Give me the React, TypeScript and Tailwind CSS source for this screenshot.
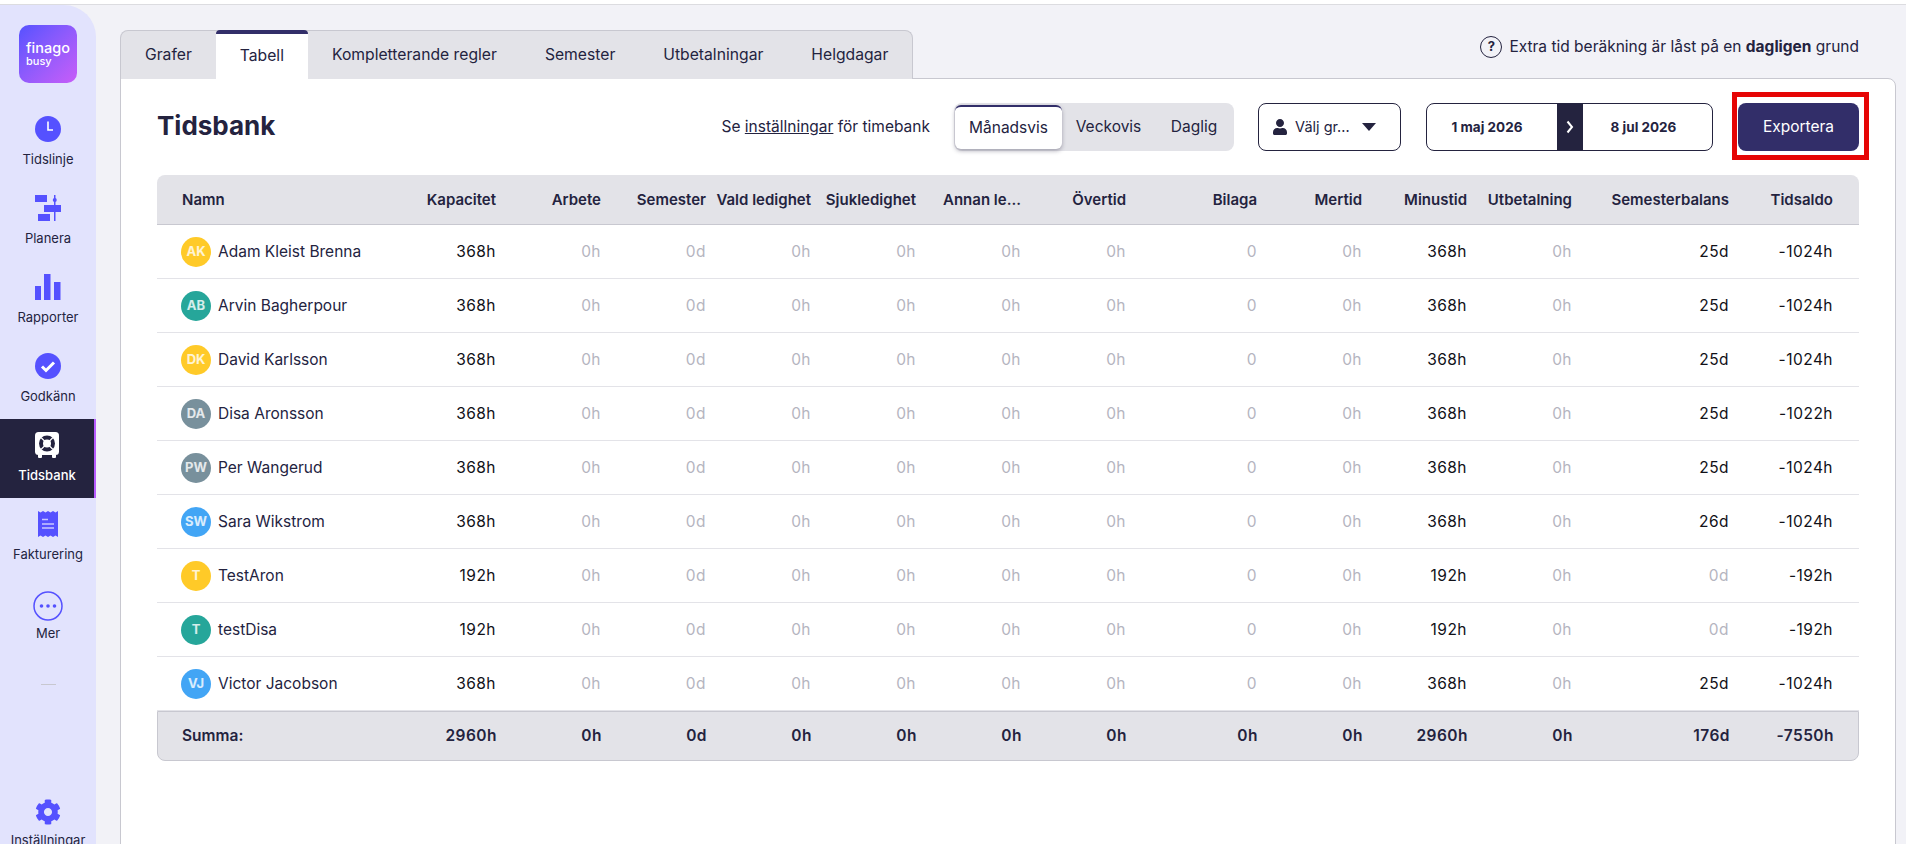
import React from 'react';
import { FaCog, FaUser } from 'react-icons/fa';

const cols = 'grid grid-cols-[234px_105px_105px_105px_105px_105px_105px_105px_131px_105px_105px_105px_157px_104px] items-center pr-[26px]';

interface Person {
  initials: string;
  name: string;
  color: string;
  capacity: string;
  minus: string;
  vacation: string;
  balance: string;
}

const people: Person[] = [
  { initials: 'AK', name: 'Adam Kleist Brenna', color: 'bg-[#ffca28]', capacity: '368h', minus: '368h', vacation: '25d', balance: '-1024h' },
  { initials: 'AB', name: 'Arvin Bagherpour', color: 'bg-[#26a69a]', capacity: '368h', minus: '368h', vacation: '25d', balance: '-1024h' },
  { initials: 'DK', name: 'David Karlsson', color: 'bg-[#ffca28]', capacity: '368h', minus: '368h', vacation: '25d', balance: '-1024h' },
  { initials: 'DA', name: 'Disa Aronsson', color: 'bg-[#78909c]', capacity: '368h', minus: '368h', vacation: '25d', balance: '-1022h' },
  { initials: 'PW', name: 'Per Wangerud', color: 'bg-[#78909c]', capacity: '368h', minus: '368h', vacation: '25d', balance: '-1024h' },
  { initials: 'SW', name: 'Sara Wikstrom', color: 'bg-[#42a5f5]', capacity: '368h', minus: '368h', vacation: '26d', balance: '-1024h' },
  { initials: 'T', name: 'TestAron', color: 'bg-[#ffca28]', capacity: '192h', minus: '192h', vacation: '0d', balance: '-192h' },
  { initials: 'T', name: 'testDisa', color: 'bg-[#26a69a]', capacity: '192h', minus: '192h', vacation: '0d', balance: '-192h' },
  { initials: 'VJ', name: 'Victor Jacobson', color: 'bg-[#42a5f5]', capacity: '368h', minus: '368h', vacation: '25d', balance: '-1024h' },
];

const headers = ['Kapacitet', 'Arbete', 'Semester', 'Vald ledighet', 'Sjukledighet', 'Annan le...', 'Övertid', 'Bilaga', 'Mertid', 'Minustid', 'Utbetalning', 'Semesterbalans', 'Tidsaldo'];
const totals = ['2960h', '0h', '0d', '0h', '0h', '0h', '0h', '0h', '0h', '2960h', '0h', '176d', '-7550h'];
const tabs = ['Grafer', 'Tabell', 'Kompletterande regler', 'Semester', 'Utbetalningar', 'Helgdagar'];

const ClockIcon = () => (
  <svg width="26" height="26" viewBox="0 0 26 26">
    <circle cx="13" cy="13" r="13" fill="#5551ff" />
    <path d="M13 5.500v8.500h5" fill="none" stroke="#fff" strokeWidth="1.600" />
  </svg>
);

const PlanIcon = () => (
  <svg width="26" height="26" viewBox="0 0 26 26" fill="#5551ff">
    <rect x="0" y="0" width="12" height="7" />
    <rect x="9" y="10" width="17" height="7" />
    <rect x="3" y="19" width="12" height="7" />
    <rect x="19" y="0" width="1.500" height="26" />
    <circle cx="19.750" cy="5" r="2" />
  </svg>
);

const BarsIcon = () => (
  <svg width="26" height="26" viewBox="0 0 26 26" fill="#5551ff">
    <rect x="0" y="12" width="6" height="14" />
    <rect x="9" y="0" width="6.500" height="26" />
    <rect x="19" y="8" width="6.500" height="18" />
  </svg>
);

const CheckIcon = () => (
  <svg width="26" height="26" viewBox="0 0 26 26">
    <circle cx="13" cy="13" r="13" fill="#5551ff" />
    <path d="M7 13.500l4 4 8-8" fill="none" stroke="#fff" strokeWidth="3" />
  </svg>
);

const SafeIcon = () => (
  <svg width="24" height="26" viewBox="0 0 24 26">
    <rect x="0" y="0" width="24" height="23" rx="3.500" fill="#fff" />
    <rect x="3" y="22" width="4" height="4" rx="1" fill="#fff" />
    <rect x="17" y="22" width="4" height="4" rx="1" fill="#fff" />
    <circle cx="12" cy="11.500" r="8" fill="#24233f" />
    <path d="M6 5.500l12 12M18 5.500l-12 12" stroke="#fff" strokeWidth="1.200" />
    <circle cx="12" cy="11.500" r="4" fill="#fff" />
  </svg>
);

const ReceiptIcon = () => (
  <svg width="20" height="26" viewBox="0 0 20 26">
    <path d="M0 0l2.500 1.500L5 0l2.500 1.500L10 0l2.500 1.500L15 0l2.500 1.500L20 0v26l-2.500-1.500L15 26l-2.500-1.500L10 26l-2.500-1.500L5 26l-2.500-1.500L0 26z" fill="#5551ff" />
    <path d="M4 8.500h6M4 13h12M4 17h12" stroke="#c9c8ff" strokeWidth="1.300" />
  </svg>
);

const MoreIcon = () => (
  <svg className="mt-[5px]" width="30" height="30" viewBox="0 0 30 30">
    <circle cx="15" cy="15" r="14" fill="none" stroke="#5551ff" strokeWidth="1.500" />
    <circle cx="8.500" cy="15" r="1.800" fill="#5551ff" />
    <circle cx="15" cy="15" r="1.800" fill="#5551ff" />
    <circle cx="21.500" cy="15" r="1.800" fill="#5551ff" />
  </svg>
);

const navItems = [
  { label: 'Tidslinje', icon: <ClockIcon /> },
  { label: 'Planera', icon: <PlanIcon /> },
  { label: 'Rapporter', icon: <BarsIcon /> },
  { label: 'Godkänn', icon: <CheckIcon /> },
  { label: 'Tidsbank', icon: <SafeIcon />, active: true },
  { label: 'Fakturering', icon: <ReceiptIcon /> },
  { label: 'Mer', icon: <MoreIcon /> },
];

const Sidebar: React.FC = () => (
  <aside className="w-[96px] shrink-0 h-full bg-[#e2e3fd] rounded-tr-[32px] flex flex-col overflow-hidden">
    <div className="shrink-0 mt-[20px] mx-[19px] h-[58px] w-[58px] rounded-[10px] bg-gradient-to-br from-[#5551ff] to-[#c85cf8] flex flex-col justify-center pl-[7px] text-white">
      <span className="text-[14.500px] leading-[15px] font-medium">finago</span>
      <span className="text-[11px] leading-[13px] font-medium">busy</span>
    </div>
    <nav className="shrink-0 mt-[20px] flex flex-col">
      {navItems.map((item) => (
        <div
          key={item.label}
          className={`h-[79px] flex flex-col items-center ${item.active ? 'bg-[#24233f] border-r-2 border-[#b85cff] text-white font-medium' : 'text-[#24233f]'}`}
        >
          <div className="h-[48px] pt-[4px] flex items-center justify-center">{item.icon}</div>
          <span className="text-[13px] leading-[16px]">{item.label}</span>
        </div>
      ))}
    </nav>
    <div className="shrink-0 mt-[28px] mx-auto w-[15px] h-px bg-[#c8c8d0]" />
    <div className="shrink-0 mt-[114px] flex flex-col items-center text-[#24233f]">
      <FaCog size={26} color="#5551ff" />
      <span className="mt-[7px] text-[13px] leading-[16px]">Inställningar</span>
    </div>
  </aside>
);

const Tabs: React.FC = () => (
  <div className="relative z-10 flex h-[49px] rounded-t-[8px] border-t border-l border-r border-[#c8c8d0] bg-[#e3e3e8]">
    {tabs.map((tab) =>
      tab === 'Tabell' ? (
        <div key={tab} className="px-[24px] bg-white border-t-4 border-[#322e69] rounded-t-[4px] -mt-px pb-[1px] flex items-center text-[#24233f] text-[15.700px]">
          {tab}
        </div>
      ) : (
        <div key={tab} className="px-[24px] flex items-center text-[#24233f] text-[15.700px]">
          {tab}
        </div>
      ),
    )}
  </div>
);

const Toolbar: React.FC = () => (
  <div className="flex items-center h-[48px]">
    <h1 className="text-[26px] font-bold text-[#24233f] -mt-[4px]">Tidsbank</h1>
    <p className="ml-auto text-[15.500px] text-[#24233f]">
      Se <span className="underline">inställningar</span> för timebank
    </p>
    <div className="ml-[24px] w-[280px] h-[48px] bg-[#e3e3e8] rounded-[8px] flex items-center text-[15.500px] text-[#24233f]">
      <div className="w-[107px] h-[44px] ml-px -mt-px bg-white border-t-2 border-[#322e69] rounded-[6px] shadow-[0_2px_4px_rgba(36,35,63,0.35)] flex items-center justify-center">Månadsvis</div>
      <div className="w-[93px] text-center">Veckovis</div>
      <div className="w-[78px] text-center">Daglig</div>
    </div>
    <div className="ml-[24px] w-[143px] h-[48px] border border-[#24233f] rounded-[8px] flex items-center pl-[13px] text-[14.500px] text-[#24233f]">
      <FaUser size={16} />
      <span className="ml-[7px] whitespace-nowrap">Välj gr...</span>
      <svg className="ml-[12px]" width="14" height="8" viewBox="0 0 14 8">
        <path d="M0 0h14L7 8z" fill="#24233f" />
      </svg>
    </div>
    <div className="ml-[25px] w-[287px] h-[48px] border border-[#24233f] rounded-[8px] flex items-stretch overflow-hidden text-[13.500px] font-bold text-[#24233f]">
      <div className="w-[130px] pr-[10px] flex items-center justify-center">1 maj 2026</div>
      <div className="w-[26px] bg-[#24233f] flex items-center justify-center">
        <svg width="8" height="14" viewBox="0 0 8 14">
          <path d="M1.500 1.500L6 7l-4.500 5.500" fill="none" stroke="#fff" strokeWidth="2" />
        </svg>
      </div>
      <div className="flex-1 pr-[8px] flex items-center justify-center">8 jul 2026</div>
    </div>
    <div className="relative ml-[25px]">
      <button className="w-[121px] h-[48px] rounded-[8px] bg-[#322e69] text-white text-[15.500px]">Exportera</button>
      <div className="absolute -left-[6px] -right-[10px] -top-[11px] -bottom-[9px] border-[5px] border-[#e60505]" />
    </div>
  </div>
);

const Table: React.FC = () => (
  <div className="mt-[24px]">
    <div className={`${cols} h-[50px] pt-px rounded-t-[8px] border-b border-[#c8c8d0] bg-[#e3e3e8] text-[15px] font-semibold text-[#24233f]`}>
      <div className="pl-[25px]">Namn</div>
      {headers.map((h) => (
        <div key={h} className="text-right whitespace-nowrap">{h}</div>
      ))}
    </div>
    {people.map((p) => (
      <div key={p.name} className={`${cols} h-[54px] pt-px border-b border-[#e3e3e8] text-[15.500px] tracking-[0.03em] last:border-b-0`}>
        <div className="pl-[24px] flex items-center gap-[7px] text-[#24233f] tracking-normal">
          <span className={`${p.color} -mt-px w-[30px] h-[30px] rounded-full flex items-center justify-center text-[13px] font-bold text-white/80`}>{p.initials}</span>
          {p.name}
        </div>
        <div className="text-right text-[#111118]">{p.capacity}</div>
        <div className="text-right text-[#b5b5bf]">0h</div>
        <div className="text-right text-[#b5b5bf]">0d</div>
        <div className="text-right text-[#b5b5bf]">0h</div>
        <div className="text-right text-[#b5b5bf]">0h</div>
        <div className="text-right text-[#b5b5bf]">0h</div>
        <div className="text-right text-[#b5b5bf]">0h</div>
        <div className="text-right text-[#b5b5bf]">0</div>
        <div className="text-right text-[#b5b5bf]">0h</div>
        <div className="text-right text-[#111118]">{p.minus}</div>
        <div className="text-right text-[#b5b5bf]">0h</div>
        <div className={`text-right ${p.vacation === '0d' ? 'text-[#b5b5bf]' : 'text-[#111118]'}`}>{p.vacation}</div>
        <div className="text-right text-[#111118]">{p.balance}</div>
      </div>
    ))}
    <div className={`${cols} h-[50px] rounded-b-[8px] border border-[#c8c8d0] bg-[#e3e3e8] text-[15.500px] tracking-[0.03em] font-semibold text-[#24233f]`}>
      <div className="pl-[24px] tracking-normal">Summa:</div>
      {totals.map((t, i) => (
        <div key={i} className="text-right">{t}</div>
      ))}
    </div>
  </div>
);

export default function App() {
  return (
    <div className="h-[844px] overflow-hidden bg-white font-['Inter','Lato',sans-serif]">
      <div className="h-[5px] border-b border-[#dcdce0]" />
      <div className="flex h-[839px] overflow-hidden bg-[#f2f2f7]">
        <Sidebar />
        <main className="flex-1 min-w-0 pl-[24px] pr-[10px] pt-[25px] flex flex-col">
          <div className="flex items-start justify-between pr-[37px]">
            <Tabs />
            <div className="flex items-center gap-[7px] mt-[3px] h-[28px] text-[15.500px] text-[#24233f]">
              <span className="w-[22px] h-[22px] rounded-full border border-[#24233f] flex items-center justify-center text-[13px] font-bold">?</span>
              <span>Extra tid beräkning är låst på en <b>dagligen</b> grund</span>
            </div>
          </div>
          <section className="flex-1 -mt-px -mb-[8px] bg-white border border-[#c8c8d0] rounded-tr-[8px] px-[36px] pt-[24px]">
            <Toolbar />
            <Table />
          </section>
        </main>
      </div>
    </div>
  );
}
